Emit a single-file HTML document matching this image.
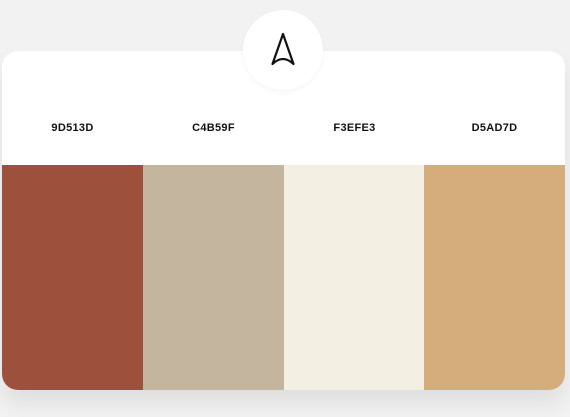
<!DOCTYPE html>
<html><head><style>
body{margin:0;width:570px;height:417px;background:#f2f2f2;position:relative;overflow:hidden;font-family:"Liberation Sans",sans-serif}
.card{position:absolute;left:2px;top:51px;width:563px;height:339px;background:#fff;border-radius:16px;overflow:hidden;box-shadow:0 14px 22px rgba(0,0,0,0.08)}
.lab{position:absolute;top:71px;width:141px;text-align:center;font-size:11px;font-weight:bold;color:#111;letter-spacing:0.3px}
.sw{position:absolute;top:114px;height:225px}
.circ{position:absolute;left:243px;top:10px;width:80px;height:80px;border-radius:50%;background:#fff;box-shadow:0 2px 6px rgba(0,0,0,0.04)}
</style></head><body>
<div class="card">
<div class="lab" style="left:0">9D513D</div>
<div class="lab" style="left:141px">C4B59F</div>
<div class="lab" style="left:282px">F3EFE3</div>
<div class="lab" style="left:422px">D5AD7D</div>
<div class="sw" style="left:0;width:141px;background:#9d513d"></div>
<div class="sw" style="left:141px;width:141px;background:#c4b59f"></div>
<div class="sw" style="left:282px;width:140px;background:#f3efe3"></div>
<div class="sw" style="left:422px;width:141px;background:#d5ad7d"></div>
</div>
<div class="circ"></div>
<svg style="position:absolute;left:263px;top:28px" width="40" height="44" viewBox="0 0 40 44">
<path d="M20 6 L9.5 36 M20 6 L30.5 36 M9.5 36 Q20 26 30.5 36" fill="none" stroke="#111" stroke-width="2.2" stroke-linecap="round" stroke-linejoin="round"/>
</svg>
</body></html>
